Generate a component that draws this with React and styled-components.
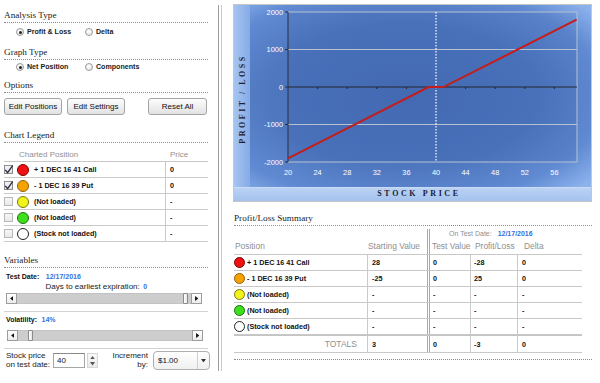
import React from 'react';
import styled, { createGlobalStyle } from 'styled-components';

const GlobalStyle = createGlobalStyle`
  html, body { margin: 0; padding: 0; background: #fff; }
  body { font-family: "Liberation Sans", Arial, Helvetica, sans-serif; }
  * { box-sizing: border-box; }
`;

const Page = styled.div`
  width: 600px;
  height: 383px;
  display: flex;
  align-items: flex-start;
  overflow: hidden;
  background: #fff;
  color: #111;
`;

const LeftPanel = styled.div`
  width: 218px;
  flex: none;
  padding: 0 8px 0 4px;
  display: flex;
  flex-direction: column;
`;

const Divider = styled.div`
  flex: none;
  width: 4px;
  height: 366px;
  margin-top: 5px;
  border-left: 1px solid #9b9b9b;
  border-right: 1px solid #c6c6c6;
`;

const RightPanel = styled.div`
  flex: 1;
  padding-left: 11px;
  display: flex;
  flex-direction: column;
`;

const SectionTitle = styled.div`
  font-family: "Liberation Serif", "Times New Roman", serif;
  font-size: 9.2px;
  line-height: 12px;
  color: #1b1b1b;
  margin-top: ${p => p.$mt || 0}px;
  margin-left: ${p => p.$ml || 0}px;
  width: ${p => p.$w}px;
  padding-bottom: 1px;
  border-bottom: 1px dotted #8c8c8c;
`;

const RadioRow = styled.div`
  display: flex;
  align-items: center;
  height: 12px;
  margin-top: ${p => p.$mt}px;
  padding-left: 12px;
`;

const RadioOption = styled.label`
  display: flex;
  align-items: center;
  gap: 3px;
  width: ${p => (p.$w ? `${p.$w}px` : 'auto')};
  font-size: 7.1px;
  font-weight: bold;
  color: #1a1a1a;
  white-space: nowrap;
`;

const RadioDot = styled.span`
  flex: none;
  width: 8px;
  height: 8px;
  border-radius: 50%;
  border: 1px solid #9a9a9a;
  background: radial-gradient(circle at 40% 35%, #ffffff, #e0e0e0);
  display: flex;
  align-items: center;
  justify-content: center;
  &::after {
    content: '';
    width: 3px;
    height: 3px;
    border-radius: 50%;
    background: #222;
    display: ${p => (p.$on ? 'block' : 'none')};
  }
`;

const ButtonRow = styled.div`
  display: flex;
  margin-top: 5px;
  height: 17px;
`;

const Btn = styled.button`
  width: ${p => p.$w}px;
  height: 17px;
  margin: 0 0 0 ${p => p.$ml || 0}px;
  padding: 0;
  font-family: "Liberation Sans", Arial, sans-serif;
  font-size: 8px;
  color: #111;
  border: 1px solid #a4a4a4;
  border-radius: 3px;
  background: linear-gradient(#fdfdfd, #e2e2e2);
`;

const LegendTable = styled.div`
  width: 204px;
  display: flex;
  flex-direction: column;
`;

const LegendHead = styled.div`
  display: grid;
  grid-template-columns: 161px 43px;
  height: 19px;
  border-bottom: 1px solid #c8c8c8;
  align-items: end;
  font-size: 8px;
  line-height: 12px;
  color: #919191;
`;

const HeadCell = styled.div`
  padding-left: ${p => p.$pl || 0}px;
  white-space: nowrap;
`;

const LegendRow = styled.div`
  display: grid;
  grid-template-columns: 161px 43px;
  height: 16px;
  border-bottom: 1px solid #cacaca;
`;

const NameCell = styled.div`
  display: flex;
  align-items: center;
  font-size: 7.2px;
  font-weight: bold;
  color: #111;
  white-space: nowrap;
`;

const ValueCell = styled.div`
  display: flex;
  align-items: center;
  border-left: ${p => p.$border || '1px solid #cacaca'};
  padding-left: ${p => p.$pl ?? 4}px;
  font-size: 7.2px;
  font-weight: bold;
  color: #111;
  white-space: nowrap;
`;

const CheckBox = styled.span`
  flex: none;
  width: 9px;
  height: 9px;
  border: 1px solid ${p => (p.$on ? '#8d8d8d' : '#b9b9b9')};
  background: ${p => (p.$on ? 'linear-gradient(#f2f4f8, #dde1ea)' : 'linear-gradient(#f7f7f7, #e8e8e8)')};
  display: flex;
  align-items: center;
  justify-content: center;
  overflow: visible;
`;

const Dot = styled.span`
  flex: none;
  width: ${p => p.$size}px;
  height: ${p => p.$size}px;
  margin-left: ${p => p.$ml}px;
  margin-right: ${p => p.$mr}px;
  border-radius: 50%;
  background: ${p => p.$fill};
  border: 1px solid ${p => p.$stroke};
`;

const VarLine = styled.div`
  margin-top: ${p => p.$mt || 0}px;
  height: ${p => p.$h}px;
  line-height: ${p => p.$h}px;
  padding-left: ${p => p.$pl || 0}px;
  font-size: 8px;
  color: #1a1a1a;
  white-space: nowrap;
`;

const VarLabel = styled.span`
  font-weight: bold;
  font-size: 7px;
  color: #111;
`;

const BlueVal = styled.span`
  color: #3570e0;
  font-weight: bold;
  font-size: 7px;
  margin-left: ${p => p.$ml || 0}px;
`;

const SliderBox = styled.div`
  display: flex;
  height: 11px;
  width: 196px;
  margin-top: ${p => p.$mt}px;
  margin-left: ${p => p.$ml}px;
  background: #cdcdcd;
`;

const ArrowBtn = styled.span`
  flex: none;
  width: 11px;
  height: 11px;
  background: linear-gradient(#ffffff, #ececec);
  border: 1px solid #9d9d9d;
  display: flex;
  align-items: center;
  justify-content: center;
`;

const Track = styled.div`
  flex: 1;
  position: relative;
  border-top: 1px solid #c2c2c2;
  border-bottom: 1px solid #c2c2c2;
`;

const Thumb = styled.span`
  position: absolute;
  top: -1px;
  width: 5px;
  height: 11px;
  background: linear-gradient(90deg, #ffffff, #e6e6e6);
  border: 1px solid #8a8a8a;
  border-radius: 1px;
`;

const Rule = styled.div`
  width: 204px;
  height: 1px;
  background: #d2d2d2;
  margin-top: ${p => p.$mt}px;
`;

const PriceRow = styled.div`
  display: flex;
  align-items: center;
  margin-top: 2px;
  height: 19px;
`;

const TwoLineLabel = styled.div`
  flex: none;
  width: ${p => p.$w}px;
  padding-left: ${p => p.$pl || 0}px;
  font-size: 8px;
  line-height: 8.4px;
  color: #1a1a1a;
  text-align: ${p => (p.$right ? 'right' : 'left')};
  white-space: nowrap;
`;

const NumInput = styled.div`
  flex: none;
  width: 32px;
  height: 15px;
  border: 1px solid #a6a6a6;
  border-top-color: #8a8a8a;
  background: #fff;
  font-size: 8px;
  line-height: 13px;
  padding-left: 3px;
  color: #111;
`;

const Spinner = styled.div`
  flex: none;
  width: 11px;
  height: 15px;
  margin-left: 2px;
  display: flex;
  flex-direction: column;
  align-items: center;
  justify-content: space-around;
  background: linear-gradient(#fafafa, #e9e9e9);
  border: 1px solid #d6d6d6;
`;

const SelectBox = styled.div`
  flex: none;
  width: 57px;
  height: 19px;
  margin-left: 5px;
  display: flex;
  border: 1px solid #b0b0b0;
  border-radius: 4px;
  background: linear-gradient(#ffffff, #f0f0f0);
  font-size: 8px;
  color: #111;
`;

const SelectText = styled.div`
  flex: 1;
  display: flex;
  align-items: center;
  padding-left: 4px;
`;

const SelectArrow = styled.div`
  flex: none;
  width: 12px;
  border-left: 1px solid #d0d0d0;
  display: flex;
  align-items: center;
  justify-content: center;
`;

const ChartBox = styled.div`
  margin-top: 4px;
  width: 359px;
  height: 198px;
  flex: none;
`;

const SumTable = styled.div`
  margin-top: 3px;
  margin-left: 1px;
  width: 348px;
  display: flex;
  flex-direction: column;
`;

const SumGrid = styled.div`
  display: grid;
  grid-template-columns: 133px 60px 43px 47px 65px;
  height: ${p => p.$h}px;
  border-top: ${p => (p.$top ? '1px solid #c4c4c4' : 'none')};
  border-bottom: ${p => (p.$noBottom ? 'none' : '1px solid #c8c8c8')};
`;

const SuperHead = styled.div`
  grid-column: 3 / 6;
  border-left: 3px double #a9a9a9;
  padding-left: 19px;
  font-size: 7px;
  line-height: 10px;
  color: #8f8f8f;
  white-space: nowrap;
`;

const SumHeadCell = styled.div`
  display: flex;
  align-items: flex-end;
  padding-bottom: 2px;
  padding-left: ${p => p.$pl || 0}px;
  border-left: ${p => p.$border || 'none'};
  font-size: 8.4px;
  line-height: 11px;
  color: #8f8f8f;
  white-space: nowrap;
`;

const TotalsLabel = styled.div`
  display: flex;
  align-items: center;
  justify-content: flex-end;
  padding-right: 10px;
  font-size: 8.5px;
  color: #8f8f8f;
`;

const legend = [
  { checked: true, fill: '#f01212', stroke: '#7d0000', name: '+ 1 DEC 16 41 Call', price: '0', sv: '28', tv: '0', pl: '-28', d: '0' },
  { checked: true, fill: '#f6a300', stroke: '#94600a', name: '- 1 DEC 16 39 Put', price: '0', sv: '-25', tv: '0', pl: '25', d: '0' },
  { checked: false, fill: '#f2f21c', stroke: '#7a7a10', name: '(Not loaded)', price: '-', sv: '-', tv: '-', pl: '-', d: '-' },
  { checked: false, fill: '#3ee01c', stroke: '#1e7010', name: '(Not loaded)', price: '-', sv: '-', tv: '-', pl: '-', d: '-' },
  { checked: false, fill: '#ffffff', stroke: '#222222', name: '(Stock not loaded)', price: '-', sv: '-', tv: '-', pl: '-', d: '-' },
];

const Tri = ({ dir, size = 5, color = '#111' }) => {
  const pts = {
    left: '4,0 4,6 0,3',
    right: '0,0 0,6 4,3',
    up: '0,4 6,4 3,0',
    down: '0,0 6,0 3,4',
  }[dir];
  const horiz = dir === 'left' || dir === 'right';
  return (
    <svg width={horiz ? size * 0.7 : size} height={horiz ? size : size * 0.7} viewBox={horiz ? '0 0 4 6' : '0 0 6 4'}>
      <polygon points={pts} fill={color} />
    </svg>
  );
};

const CheckMark = () => (
  <svg width="10" height="10" viewBox="0 0 10 10" style={{ overflow: 'visible' }}>
    <path d="M1.3 4.8 L3.6 7.6 L8.6 0.6" fill="none" stroke="#2a2a3a" strokeWidth="1.3" />
  </svg>
);

const Slider = ({ mt, ml, value }) => (
  <SliderBox $mt={mt} $ml={ml}>
    <ArrowBtn><Tri dir="left" /></ArrowBtn>
    <Track>
      <Thumb style={{ left: `${value * 168}px` }} />
    </Track>
    <ArrowBtn><Tri dir="right" /></ArrowBtn>
  </SliderBox>
);

const xs = v => 55 + (v - 20) * 7.4;
const ys = v => 83 - (v * 75) / 2000;

const Chart = () => {
  const xTicks = [20, 24, 28, 32, 36, 40, 44, 48, 52, 56];
  const yTicks = [2000, 1000, 0, -1000, -2000];
  const line = [
    [20, -1903],
    [39, -3],
    [41, -3],
    [59, 1797],
  ].map(([x, y]) => `${xs(x)},${ys(y)}`).join(' ');
  return (
    <svg width="359" height="198" viewBox="0 0 359 198">
      <defs>
        <radialGradient id="bgGrad" cx="0.45" cy="0.5" r="0.72">
          <stop offset="0" stopColor="#466eb6" />
          <stop offset="0.55" stopColor="#4e77c0" />
          <stop offset="0.82" stopColor="#608ad2" />
          <stop offset="1" stopColor="#8cb2ec" />
        </radialGradient>
        <linearGradient id="leftGrad" x1="0" y1="0" x2="1" y2="0">
          <stop offset="0" stopColor="#a7c6f2" />
          <stop offset="1" stopColor="#86abe6" />
        </linearGradient>
        <linearGradient id="botGrad" x1="0" y1="0" x2="0" y2="1">
          <stop offset="0" stopColor="#bcd4f4" />
          <stop offset="1" stopColor="#a4c2ef" />
        </linearGradient>
      </defs>
      <rect x="0" y="0" width="359" height="198" fill="#ffffff" />
      <rect x="17" y="0" width="341" height="183" fill="url(#bgGrad)" />
      <rect x="0" y="0" width="17" height="183" fill="url(#leftGrad)" />
      <rect x="0" y="183" width="358" height="14" fill="url(#botGrad)" />
      <line x1="0" y1="183.5" x2="358" y2="183.5" stroke="#c9dbf6" strokeWidth="1" />
      <rect x="0.5" y="0.5" width="358" height="197" fill="none" stroke="#c6c6c6" />
      <rect x="55" y="8" width="289" height="150" fill="rgba(40,70,150,0.12)" />
      {[2000, 1000, -1000, -2000].map(v => (
        <line key={v} x1="55" x2="344" y1={ys(v)} y2={ys(v)} stroke="#b7c1d2" strokeWidth="1" />
      ))}
      <line x1="344" x2="344" y1="8" y2="158" stroke="#b7c1d2" strokeWidth="1" />
      <line x1="55" x2="55" y1="8" y2="158" stroke="#2c2f3a" strokeWidth="1" />
      <line x1="55" x2="344" y1="83" y2="83" stroke="#25272f" strokeWidth="1" />
      {xTicks.slice(1).map(v => (
        <line key={v} x1={xs(v)} x2={xs(v)} y1="83" y2="85" stroke="#25272f" strokeWidth="1" />
      ))}
      {yTicks.map(v => (
        <line key={v} x1="52" x2="55" y1={ys(v)} y2={ys(v)} stroke="#2c2f3a" strokeWidth="1" />
      ))}
      <line x1={xs(40)} x2={xs(40)} y1="8" y2="158" stroke="#ffffff" strokeWidth="1.2" strokeDasharray="1.5 1.5" />
      <polyline points={line} fill="none" stroke="#c41d1a" strokeWidth="2" />
      {yTicks.map(v => (
        <text key={v} x="50" y={ys(v) + 2.6} textAnchor="end" fontFamily='"Liberation Sans", Arial, sans-serif' fontSize="7.4" fill="#ffffff">{v}</text>
      ))}
      {xTicks.map(v => (
        <text key={v} x={xs(v)} y="170.6" textAnchor="middle" fontFamily='"Liberation Sans", Arial, sans-serif' fontSize="7.4" fill="#ffffff">{v}</text>
      ))}
      <text transform="translate(11.6,95) rotate(-90)" textAnchor="middle" fontFamily='"Liberation Serif", "Times New Roman", serif' fontWeight="bold" fontSize="8" letterSpacing="2.5" fill="#1b2033">PROFIT / LOSS</text>
      <text x="186" y="192" textAnchor="middle" fontFamily='"Liberation Serif", "Times New Roman", serif' fontWeight="bold" fontSize="8" letterSpacing="2.6" fill="#1b2033">STOCK PRICE</text>
    </svg>
  );
};

export default function App() {
  return (
    <>
      <GlobalStyle />
      <Page>
        <LeftPanel>
          <SectionTitle $mt={9} $w={204}>Analysis Type</SectionTitle>
          <RadioRow $mt={3}>
            <RadioOption $w={69}><RadioDot $on />Profit &amp; Loss</RadioOption>
            <RadioOption><RadioDot />Delta</RadioOption>
          </RadioRow>
          <SectionTitle $mt={8} $w={204}>Graph Type</SectionTitle>
          <RadioRow $mt={1}>
            <RadioOption $w={69}><RadioDot $on />Net Position</RadioOption>
            <RadioOption><RadioDot />Components</RadioOption>
          </RadioRow>
          <SectionTitle $mt={6} $w={204}>Options</SectionTitle>
          <ButtonRow>
            <Btn $w={58}>Edit Positions</Btn>
            <Btn $w={58} $ml={5}>Edit Settings</Btn>
            <Btn $w={59} $ml={23}>Reset All</Btn>
          </ButtonRow>
          <SectionTitle $mt={14} $w={204}>Chart Legend</SectionTitle>
          <LegendTable>
            <LegendHead>
              <HeadCell $pl={15}>Charted Position</HeadCell>
              <HeadCell $pl={5}>Price</HeadCell>
            </LegendHead>
            {legend.map((r, i) => (
              <LegendRow key={i}>
                <NameCell>
                  <CheckBox $on={r.checked}>{r.checked && <CheckMark />}</CheckBox>
                  <Dot $size={12} $ml={4} $mr={5} $fill={r.fill} $stroke={r.stroke} />
                  {r.name}
                </NameCell>
                <ValueCell $pl={4}>{r.price}</ValueCell>
              </LegendRow>
            ))}
          </LegendTable>
          <SectionTitle $mt={12} $w={204}>Variables</SectionTitle>
          <VarLine $mt={4} $h={10} $pl={2}>
            <VarLabel>Test Date:</VarLabel>
            <BlueVal $ml={6.5}>12/17/2016</BlueVal>
          </VarLine>
          <VarLine $h={9} $pl={41.5}>
            Days to earliest expiration:<BlueVal $ml={3.5}>0</BlueVal>
          </VarLine>
          <Slider mt={2} ml={2} value={0.99} />
          <Rule $mt={7} />
          <VarLine $mt={3} $h={10} $pl={2}>
            <VarLabel>Volatility:</VarLabel>
            <BlueVal $ml={4.5}>14%</BlueVal>
          </VarLine>
          <Slider mt={5} ml={3} value={0.058} />
          <Rule $mt={7} />
          <PriceRow>
            <TwoLineLabel $w={49} $pl={2}>Stock price<br />on test date:</TwoLineLabel>
            <NumInput>40</NumInput>
            <Spinner>
              <Tri dir="up" size={5} color="#555" />
              <Tri dir="down" size={5} color="#555" />
            </Spinner>
            <TwoLineLabel $w={50} $right>Increment<br />by:</TwoLineLabel>
            <SelectBox>
              <SelectText>$1.00</SelectText>
              <SelectArrow><Tri dir="down" size={5} color="#333" /></SelectArrow>
            </SelectBox>
          </PriceRow>
        </LeftPanel>
        <Divider />
        <RightPanel>
          <ChartBox><Chart /></ChartBox>
          <SectionTitle $mt={10} $ml={1} $w={358}>Profit/Loss Summary</SectionTitle>
          <SumTable>
            <SumGrid $h={10} $noBottom>
              <SuperHead>On Test Date: <BlueVal $ml={4}>12/17/2016</BlueVal></SuperHead>
            </SumGrid>
            <SumGrid $h={16}>
              <SumHeadCell $pl={1}>Position</SumHeadCell>
              <SumHeadCell $pl={1}>Starting Value</SumHeadCell>
              <SumHeadCell $pl={2} $border="3px double #a9a9a9">Test Value</SumHeadCell>
              <SumHeadCell $pl={5}>Profit/Loss</SumHeadCell>
              <SumHeadCell $pl={7}>Delta</SumHeadCell>
            </SumGrid>
            {legend.map((r, i) => (
              <SumGrid key={i} $h={16}>
                <NameCell>
                  <Dot $size={11} $ml={0} $mr={2} $fill={r.fill} $stroke={r.stroke} />
                  {r.name}
                </NameCell>
                <ValueCell $pl={4}>{r.sv}</ValueCell>
                <ValueCell $pl={3} $border="3px double #a9a9a9">{r.tv}</ValueCell>
                <ValueCell $pl={3}>{r.pl}</ValueCell>
                <ValueCell $pl={4}>{r.d}</ValueCell>
              </SumGrid>
            ))}
            <SumGrid $h={18} $top>
              <TotalsLabel>TOTALS</TotalsLabel>
              <ValueCell $pl={4}>3</ValueCell>
              <ValueCell $pl={3} $border="3px double #a9a9a9">0</ValueCell>
              <ValueCell $pl={3}>-3</ValueCell>
              <ValueCell $pl={4}>0</ValueCell>
            </SumGrid>
          </SumTable>
          <SectionTitle $mt={6} $ml={1} $w={358} style={{ height: 1, padding: 0 }} />
        </RightPanel>
      </Page>
    </>
  );
}
